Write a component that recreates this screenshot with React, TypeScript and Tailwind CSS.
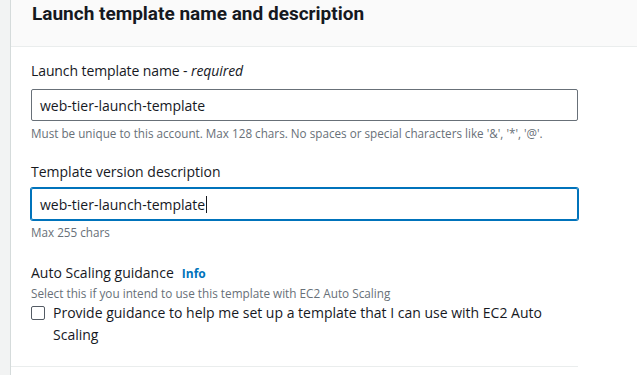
export default function App() {
  const font = { fontFamily: '"Open Sans", "Noto Sans", Arial, sans-serif' };
  const titleFont = { fontFamily: 'Roboto, "Open Sans", Arial, sans-serif' };
  return (
    <div className="flex h-[375px] w-[637px] overflow-hidden bg-white text-[#16191f]" style={font}>
      <div className="w-[11px] shrink-0 border-r border-[#d5dbdb] bg-[#f2f3f3]" />
      <div className="flex-1">
        <div className="h-[47px] border-b border-[#eaeded] bg-[#fafafa] pl-[21px] pt-[1px]">
          <h2 className="text-[19px] font-bold leading-[26px]" style={titleFont}>
            Launch template name and description
          </h2>
        </div>
        <div className="w-[567px] border-b border-[#eaeded] pb-[20px] pl-[20px] pt-[13px]">
          <div className="text-[14px] leading-[22px] tracking-[-0.1px]">
            Launch template name - <i>required</i>
          </div>
          <div className="mt-[7px] flex h-[32px] w-[547px] items-center rounded-[2px] border border-[#687078] pl-[8px] text-[14px]">
            web-tier-launch-template
          </div>
          <div className="mt-[4px] text-[11.7px] leading-[16px] text-[#687078]">
            Must be unique to this account. Max 128 chars. No spaces or special characters like '&amp;', '*', '@'.
          </div>

          <div className="mt-[20px] text-[14px] leading-[22px]">Template version description</div>
          <div className="mt-[5px] flex h-[32px] w-[547px] items-center rounded-[2px] border border-[#0073bb] pl-[8px] text-[14px] shadow-[0_0_0_1px_#0073bb]">
            web-tier-launch-template<span className="ml-[1px] inline-block h-[17px] w-px bg-[#16191f]" />
          </div>
          <div className="mt-[4px] text-[11.7px] leading-[16px] text-[#687078]">Max 255 chars</div>

          <div className="mt-[22px] flex items-baseline text-[14px] leading-[22px]">
            Auto Scaling guidance
            <span className="ml-[8px] text-[12px] font-bold text-[#0073bb]">Info</span>
          </div>
          <div className="text-[11.75px] leading-[16px] text-[#687078]">
            Select this if you intend to use this template with EC2 Auto Scaling
          </div>
          <div className="mt-[1px] flex w-[547px] items-start">
            <div className="mt-[4px] h-[14px] w-[14px] shrink-0 rounded-[2px] border border-[#545b64] bg-white" />
            <div className="ml-[8px] text-[14px] leading-[22px]">
              Provide guidance to help me set up a template that I can use with EC2 Auto Scaling
            </div>
          </div>
        </div>
      </div>
    </div>
  );
}
